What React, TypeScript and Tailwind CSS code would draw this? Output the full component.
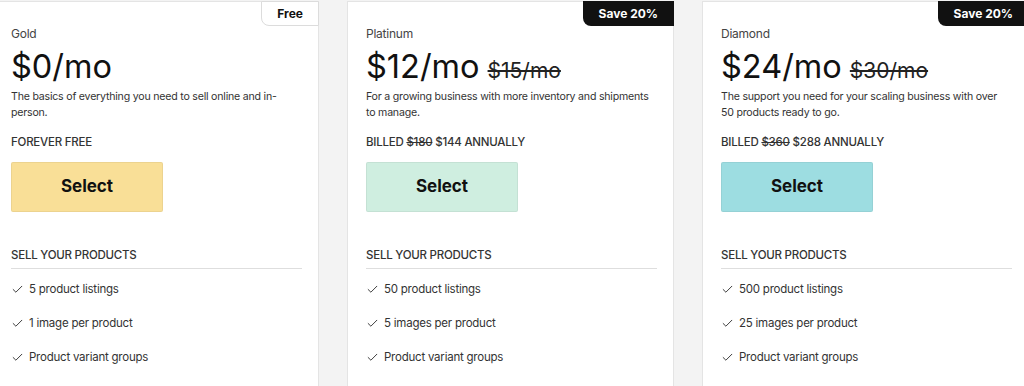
import { Check } from 'lucide-react'

type Plan = {
  name: string
  price: string
  old?: string
  desc: string
  billed: React.ReactNode
  btn: string
  badge: string
  dark: boolean
  features: string[]
}

const plans: Plan[] = [
  {
    name: 'Gold',
    price: '$0/mo',
    desc: 'The basics of everything you need to sell online and in-person.',
    billed: 'FOREVER FREE',
    btn: 'bg-[#f9df97]',
    badge: 'Free',
    dark: false,
    features: ['5 product listings', '1 image per product', 'Product variant groups'],
  },
  {
    name: 'Platinum',
    price: '$12/mo',
    old: '$15/mo',
    desc: 'For a growing business with more inventory and shipments to manage.',
    billed: (
      <>
        BILLED <s>$180</s> $144 ANNUALLY
      </>
    ),
    btn: 'bg-[#cfeee0]',
    badge: 'Save 20%',
    dark: true,
    features: ['50 product listings', '5 images per product', 'Product variant groups'],
  },
  {
    name: 'Diamond',
    price: '$24/mo',
    old: '$30/mo',
    desc: 'The support you need for your scaling business with over 50 products ready to go.',
    billed: (
      <>
        BILLED <s>$360</s> $288 ANNUALLY
      </>
    ),
    btn: 'bg-[#9ddde1]',
    badge: 'Save 20%',
    dark: true,
    features: ['500 product listings', '25 images per product', 'Product variant groups'],
  },
]

const Card = ({ p }: { p: Plan }) => {
  return (
    <div className="relative w-[327px] shrink-0 bg-white border border-[#e4e4e4] pl-[18px] pr-[16px] pt-[24px] h-[400px]">
      <div
        className={
          p.dark
            ? 'absolute -top-px -right-px h-[25px] px-[16px] flex items-center bg-[#111] text-white text-[12px] font-bold rounded-bl-[8px]'
            : 'absolute -top-px -right-px h-[25px] px-[15px] flex items-center bg-white border border-[#dcdcdc] text-[#111] text-[12px] font-bold rounded-bl-[8px]'
        }
      >
        {p.badge}
      </div>
      <div className="text-[12px] tracking-[-0.02em] text-[#444] leading-[16px]">{p.name}</div>
      <div className="flex items-baseline gap-[8px] mt-[5px] h-[40px] leading-[40px]">
        <span className="text-[32.5px] text-[#111]">{p.price}</span>
        {p.old && <span className="text-[21px] text-[#222] line-through">{p.old}</span>}
      </div>
      <p className="text-[10.6px] tracking-[-0.02em] text-[#333] leading-[16px] mt-[2px] h-[32px] pr-[7px]">{p.desc}</p>
      <div className="text-[11.5px] tracking-[-0.02em] text-[#333] font-medium mt-[13px] leading-[16px]">{p.billed}</div>
      <button className={`mt-[12px] w-[152px] h-[50px] rounded-[2px] border border-black/5 text-[17px] font-bold text-[#111] ${p.btn}`}>
        Select
      </button>
      <div className="mt-[35px] text-[11.5px] tracking-[-0.02em] text-[#333] font-medium leading-[16px] pb-[5px] border-b border-[#dedede]">
        SELL YOUR PRODUCTS
      </div>
      <ul className="mt-[12px] flex flex-col gap-[18px]">
        {p.features.map((f) => (
          <li key={f} className="flex items-center gap-[5px] text-[11.5px] tracking-[-0.02em] text-[#333] leading-[16px]">
            <Check size={13} strokeWidth={1.75} className="text-[#333]" />
            {f}
          </li>
        ))}
      </ul>
    </div>
  )
}

export default function App() {
  return (
    <div className="w-[1024px] h-[386px] overflow-hidden bg-[#f3f3f3] font-['Inter',sans-serif]">
      <div className="flex gap-[28px] -ml-[8px] pt-px">
        {plans.map((p) => (
          <Card key={p.name} p={p} />
        ))}
      </div>
    </div>
  )
}
